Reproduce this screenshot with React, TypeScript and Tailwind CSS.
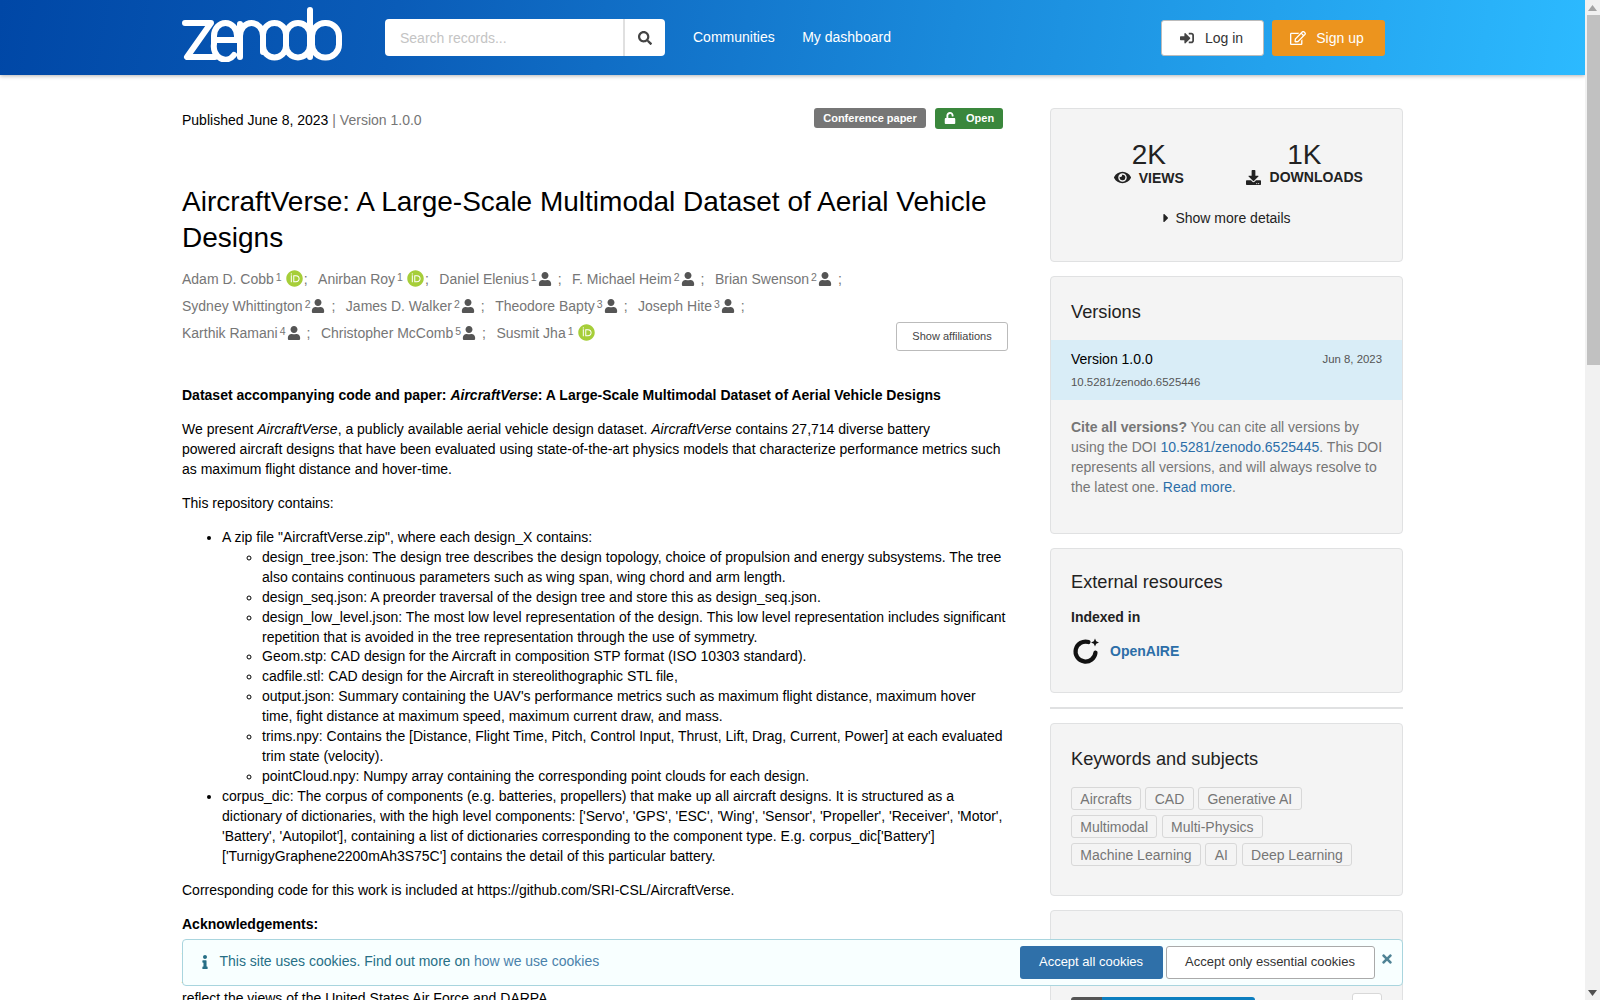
import { FaCaretRight, FaDownload, FaEye, FaInfo, FaOrcid, FaRegEdit, FaSearch, FaSignInAlt, FaTimes, FaUnlock, FaUser } from 'react-icons/fa';

function ZenodoLogo() {
  return (
    <svg width="160" height="62" viewBox="0 0 160 62" fill="none" stroke="white" strokeWidth="6" strokeLinecap="round" strokeLinejoin="round">
      <path d="M3 23 H29 L5 57 H33" />
      <path d="M32 40 H55 V36 A11.5 13 0 0 0 32 36 V44 A11.5 13 0 0 0 52 55" />
      <path d="M58 57 V24 M58 36 A11.5 13 0 0 1 81 36 V52" />
      <rect x="81" y="23" width="23" height="34.5" rx="11.5" />
      <rect x="104" y="23" width="24" height="34.5" rx="12" />
      <path d="M128 10 V57" />
      <rect x="130" y="23" width="27" height="34.5" rx="13" />
    </svg>
  );
}

function OpenAireLogo() {
  return (
    <svg width="28" height="28" viewBox="0 0 28 28" fill="none">
      <path d="M16.5 5 A10 10 0 1 0 23.5 15.5" stroke="#111" strokeWidth="4.2" strokeLinecap="round" />
      <path d="M23 1.5 L24.2 4.3 L27 5.5 L24.2 6.7 L23 9.5 L21.8 6.7 L19 5.5 L21.8 4.3 Z" fill="#111" />
    </svg>
  );
}

type Author = { name: string; aff: string; orcid?: boolean };

const authorRows: Author[][] = [
  [
    { name: 'Adam D. Cobb', aff: '1', orcid: true },
    { name: 'Anirban Roy', aff: '1', orcid: true },
    { name: 'Daniel Elenius', aff: '1' },
    { name: 'F. Michael Heim', aff: '2' },
    { name: 'Brian Swenson', aff: '2' },
  ],
  [
    { name: 'Sydney Whittington', aff: '2' },
    { name: 'James D. Walker', aff: '2' },
    { name: 'Theodore Bapty', aff: '3' },
    { name: 'Joseph Hite', aff: '3' },
  ],
  [
    { name: 'Karthik Ramani', aff: '4' },
    { name: 'Christopher McComb', aff: '5' },
    { name: 'Susmit Jha', aff: '1', orcid: true },
  ],
];

function AuthorItem({ author, last }: { author: Author; last: boolean }) {
  return (
    <span className="flex items-center mr-[10.5px]">
      <span>{author.name}</span>
      <sup className="text-[10.5px] ml-[2px] -mt-[3px] top-0">{author.aff}</sup>
      {author.orcid ? (
        <FaOrcid size={17} className="ml-[4px] text-[#a6ce39]" />
      ) : (
        <FaUser size={14} className="ml-[1px] text-[#555]" />
      )}
      {!last && <span className={author.orcid ? 'ml-[1px]' : 'ml-[6px]'}>;</span>}
    </span>
  );
}

const keywordRows = [
  ['Aircrafts', 'CAD', 'Generative AI'],
  ['Multimodal', 'Multi-Physics'],
  ['Machine Learning', 'AI', 'Deep Learning'],
];

function Card({ className, children }: { className: string; children: React.ReactNode }) {
  return (
    <div className={`border border-[#e0e1e2] rounded-[4px] bg-[#f4f4f4] ${className}`}>{children}</div>
  );
}

export default function App() {
  return (
    <div className="flex h-screen overflow-hidden bg-white text-[14px] leading-[20px] text-black font-['Liberation_Sans',Arial,sans-serif]">
      <div className="relative flex-1 min-w-0 overflow-hidden">
        {/* Header */}
        <header className="relative z-10 h-[75px] flex items-start pl-[182px] pr-[200px] bg-[linear-gradient(100deg,#0047a6_0%,#0a5cb8_25%,#1a8adb_60%,#2cbaff_100%)] shadow-[0_1px_4px_rgba(0,0,0,0.3)]">
          <div className="w-[160px] mr-[43px]">
            <ZenodoLogo />
          </div>
          <div className="flex mt-[19px] h-[37px] w-[280px] rounded-[4px] bg-white overflow-hidden">
            <div className="flex-1 flex items-center pl-[15px] text-[14px] text-[#c4c4c4] border-r-2 border-[#e0e0e0]">
              Search records...
            </div>
            <div className="w-[40px] flex items-center justify-center text-[#444]">
              <FaSearch size={14} />
            </div>
          </div>
          <nav className="flex gap-[27.5px] ml-[28px] mt-[27px] text-[14px] leading-[20px] text-white">
            <span>Communities</span>
            <span>My dashboard</span>
          </nav>
          <div className="flex gap-[8px] ml-auto mt-[20px] text-[14px]">
            <div className="w-[103px] h-[36px] pr-[2px] flex items-center justify-center gap-[11px] bg-white border border-[#bbb] rounded-[3px] text-[#333]">
              <FaSignInAlt size={14} className="text-[#444]" />
              Log in
            </div>
            <div className="w-[113px] h-[36px] pr-[3px] flex items-center justify-center gap-[10px] bg-[#ec941e] rounded-[3px] text-white">
              <FaRegEdit size={16} />
              Sign up
            </div>
          </div>
        </header>

        <div className="flex pl-[182px] pt-[33px] gap-[42px]">
          {/* Record */}
          <main className="w-[826px] flex-none">
            <div className="flex items-center h-[24px]">
              <span>Published June 8, 2023</span>
              <span className="ml-[4px] text-[#767676]">| Version 1.0.0</span>
              <div className="ml-auto mr-[5px] -mt-[4px] flex items-center gap-[9px] text-[11px] font-bold text-white">
                <span className="h-[20px] w-[112px] flex items-center justify-center rounded-[3px] bg-[#767676]">Conference paper</span>
                <span className="h-[21px] w-[68px] flex items-center rounded-[3px] bg-[#3a873c] pl-[9px]">
                  <FaUnlock size={12} />
                  <span className="ml-[10px]">Open</span>
                </span>
              </div>
            </div>

            <h1 className="mt-[52px] text-[28px] leading-[36px] font-normal">
              AircraftVerse: A Large-Scale Multimodal Dataset of Aerial Vehicle Designs
            </h1>

            <div className="mt-[9px] flex items-start text-[#767676]">
              <div className="flex-1">
                {authorRows.map((row, i) => (
                  <div key={i} className="flex items-center h-[27px]">
                    {row.map((a, j) => (
                      <AuthorItem key={a.name} author={a} last={i === 2 && j === row.length - 1} />
                    ))}
                  </div>
                ))}
              </div>
              <div className="mt-[57px] w-[112px] h-[29px] flex items-center justify-center border border-[#bbb] rounded-[3px] text-[11px] leading-[18px] pb-[1px] text-[#444]">
                Show affiliations
              </div>
            </div>

            <div className="mt-[35px] leading-[19.95px] [&>p]:mb-[14px]">
              <p>
                <b>
                  Dataset accompanying code and paper: <i>AircraftVerse</i>: A Large-Scale Multimodal Dataset of Aerial Vehicle Designs
                </b>
              </p>
              <p>
                We present <i>AircraftVerse</i>, a publicly available aerial vehicle design dataset. <i>AircraftVerse</i> contains 27,714 diverse battery
                <br />
                powered aircraft designs that have been evaluated using state-of-the-art physics models that characterize performance metrics such as maximum flight distance and hover-time.
              </p>
              <p>This repository contains:</p>
              <ul className="list-disc pl-[40px] mb-[14px]">
                <li>
                  A zip file "AircraftVerse.zip", where each design_X contains:
                  <ul className="list-[circle] pl-[40px]">
                    <li>design_tree.json: The design tree describes the design topology, choice of propulsion and energy subsystems. The tree also contains continuous parameters such as wing span, wing chord and arm length.</li>
                    <li>design_seq.json: A preorder traversal of the design tree and store this as design_seq.json.</li>
                    <li>design_low_level.json: The most low level representation of the design. This low level representation includes significant repetition that is avoided in the tree representation through the use of symmetry.</li>
                    <li>Geom.stp: CAD design for the Aircraft in composition STP format (ISO 10303 standard).</li>
                    <li>cadfile.stl: CAD design for the Aircraft in stereolithographic STL file,</li>
                    <li>output.json: Summary containing the UAV's performance metrics such as maximum flight distance, maximum hover time, fight distance at maximum speed, maximum current draw, and mass.</li>
                    <li>trims.npy: Contains the [Distance, Flight Time, Pitch, Control Input, Thrust, Lift, Drag, Current, Power] at each evaluated trim state (velocity).</li>
                    <li>pointCloud.npy: Numpy array containing the corresponding point clouds for each design.</li>
                  </ul>
                </li>
                <li>
                  corpus_dic: The corpus of components (e.g. batteries, propellers) that make up all aircraft designs. It is structured as a dictionary of dictionaries, with the high level components: ['Servo', 'GPS', 'ESC', 'Wing', 'Sensor', 'Propeller', 'Receiver', 'Motor', 'Battery', 'Autopilot'], containing a list of dictionaries corresponding to the component type. E.g. corpus_dic['Battery']
                  <br />
                  ['TurnigyGraphene2200mAh3S75C'] contains the detail of this particular battery.
                </li>
              </ul>
              <p>Corresponding code for this work is included at https://github.com/SRI-CSL/AircraftVerse.</p>
              <p><b>Acknowledgements:</b></p>
              <p>
                This material is based upon work supported by the United States Air Force and DARPA under Contract No. FA8750-20-C-0002.
                <br />
                Any opinions, findings and conclusions or recommendations expressed in this material are those of the author(s) and do not
                <br />
                reflect the views of the United States Air Force and DARPA.
              </p>
            </div>
          </main>

          {/* Sidebar */}
          <aside className="w-[353px] flex-none">
            <Card className="h-[154px] px-[20px] pt-[30px] text-[#222]">
              <div className="grid grid-cols-2 text-center">
                <div>
                  <div className="text-[28px] leading-[32px]">2K</div>
                  <div className="flex items-center justify-center gap-[8px] font-bold leading-[16px] -mt-[2px]">
                    <FaEye size={17} />
                    VIEWS
                  </div>
                </div>
                <div>
                  <div className="text-[28px] leading-[32px]">1K</div>
                  <div className="flex items-center justify-center gap-[9px] font-bold leading-[16px] -mt-[2px]">
                    <FaDownload size={15} />
                    DOWNLOADS
                  </div>
                </div>
              </div>
              <div className="mt-[22px] pr-[3px] flex items-center justify-center gap-[2px]">
                <FaCaretRight size={14} />
                Show more details
              </div>
            </Card>

            <Card className="mt-[14px] h-[258px]">
              <h2 className="px-[20px] pt-[24px] pb-[17px] text-[18.2px] leading-[22px] font-normal text-[#222]">Versions</h2>
              <div className="h-[60px] px-[20px] pt-[9px] bg-[#d9edf7]">
                <div className="flex justify-between items-center">
                  <span>Version 1.0.0</span>
                  <span className="text-[11.4px] text-[#555]">Jun 8, 2023</span>
                </div>
                <div className="mt-[3px] text-[11.4px] text-[#555]">10.5281/zenodo.6525446</div>
              </div>
              <p className="pl-[20px] pr-[14px] pt-[17px] text-[#767676]">
                <b>Cite all versions?</b> You can cite all versions by using the DOI <span className="text-[#2c6ea8]">10.5281/zenodo.6525445</span>. This DOI represents all versions, and will always resolve to the latest one. <span className="text-[#2c6ea8]">Read more</span>.
              </p>
            </Card>

            <Card className="mt-[14px] h-[145px] px-[20px] pt-[22px] text-[#222]">
              <h2 className="text-[18.2px] leading-[22px] font-normal">External resources</h2>
              <div className="mt-[14px] font-bold">Indexed in</div>
              <div className="mt-[10px] flex items-center font-bold text-[#2c6ea8]">
                <span className="ml-[1px] mr-[10px]"><OpenAireLogo /></span>
                OpenAIRE
              </div>
            </Card>

            <div className="mt-[14px] h-[2px] bg-[#e0e1e2]" />

            <Card className="mt-[14px] h-[173px] px-[20px] pt-[24px]">
              <h2 className="text-[18.2px] leading-[22px] font-normal text-[#222]">Keywords and subjects</h2>
              <div className="mt-[17px] flex flex-col gap-[5px]">
                {keywordRows.map((row) => (
                  <div key={row[0]} className="flex gap-[4.5px]">
                    {row.map((k) => (
                      <span key={k} className="h-[23px] px-[8.3px] flex items-center border border-[#d8d8d8] rounded-[3px] text-[#767676]">
                        {k}
                      </span>
                    ))}
                  </div>
                ))}
              </div>
            </Card>

            <Card className="mt-[14px] h-[200px] px-[20px] pt-[60px]">
              <div className="font-bold text-[#222]">DOI</div>
              <div className="mt-[2px] flex items-start justify-between">
                <div className="flex mt-[4px] w-[184px] h-[20px] rounded-[3px] overflow-hidden">
                  <span className="w-[31px] bg-[#555]" />
                  <span className="flex-1 bg-[#0d7ebf]" />
                </div>
                <div className="w-[30px] h-[28px] border border-[#d8d8d8] rounded-[3px] bg-white" />
              </div>
            </Card>
          </aside>
        </div>

        {/* Cookie banner */}
        <div className="absolute z-20 left-[182px] top-[939px] w-[1221px] h-[47px] flex items-center pl-[15px] border border-[#a9d5de] rounded-[4px] bg-[#f8ffff] text-[#276f86]">
          <FaInfo size={14} className="-mt-[2px]" />
          <span className="ml-[7.5px] -mt-[4px] text-[14px]">
            This site uses cookies. Find out more on <span className="text-[#4a82ab]">how we use cookies</span>
          </span>
          <div className="ml-auto flex gap-[3px] text-[13px] -mt-[1px]">
            <div className="w-[143px] h-[33px] flex items-center justify-center rounded-[3px] bg-[#2f70a9] text-white">Accept all cookies</div>
            <div className="w-[209px] h-[33px] flex items-center justify-center rounded-[3px] border border-[#aaa] bg-white text-[#333]">Accept only essential cookies</div>
          </div>
          <FaTimes size={14} className="ml-[5.5px] mr-[8px] -mt-[7px] text-[#4f8395]" />
        </div>
      </div>

      {/* Scrollbar */}
      <div className="w-[15px] flex-none flex flex-col items-center bg-[#f1f1f1] text-[#505050]">
        <div className="h-[15px] flex items-center justify-center">
          <svg width="9" height="6" viewBox="0 0 9 6"><path d="M4.5 0 L9 6 H0 Z" fill="#a3a3a3" /></svg>
        </div>
        <div className="w-[13px] ml-[2px] h-[350px] bg-[#c1c1c1]" />
        <div className="flex-1" />
        <div className="h-[15px] flex items-center justify-center">
          <svg width="9" height="6" viewBox="0 0 9 6"><path d="M0 0 H9 L4.5 6 Z" fill="#505050" /></svg>
        </div>
      </div>
    </div>
  );
}
